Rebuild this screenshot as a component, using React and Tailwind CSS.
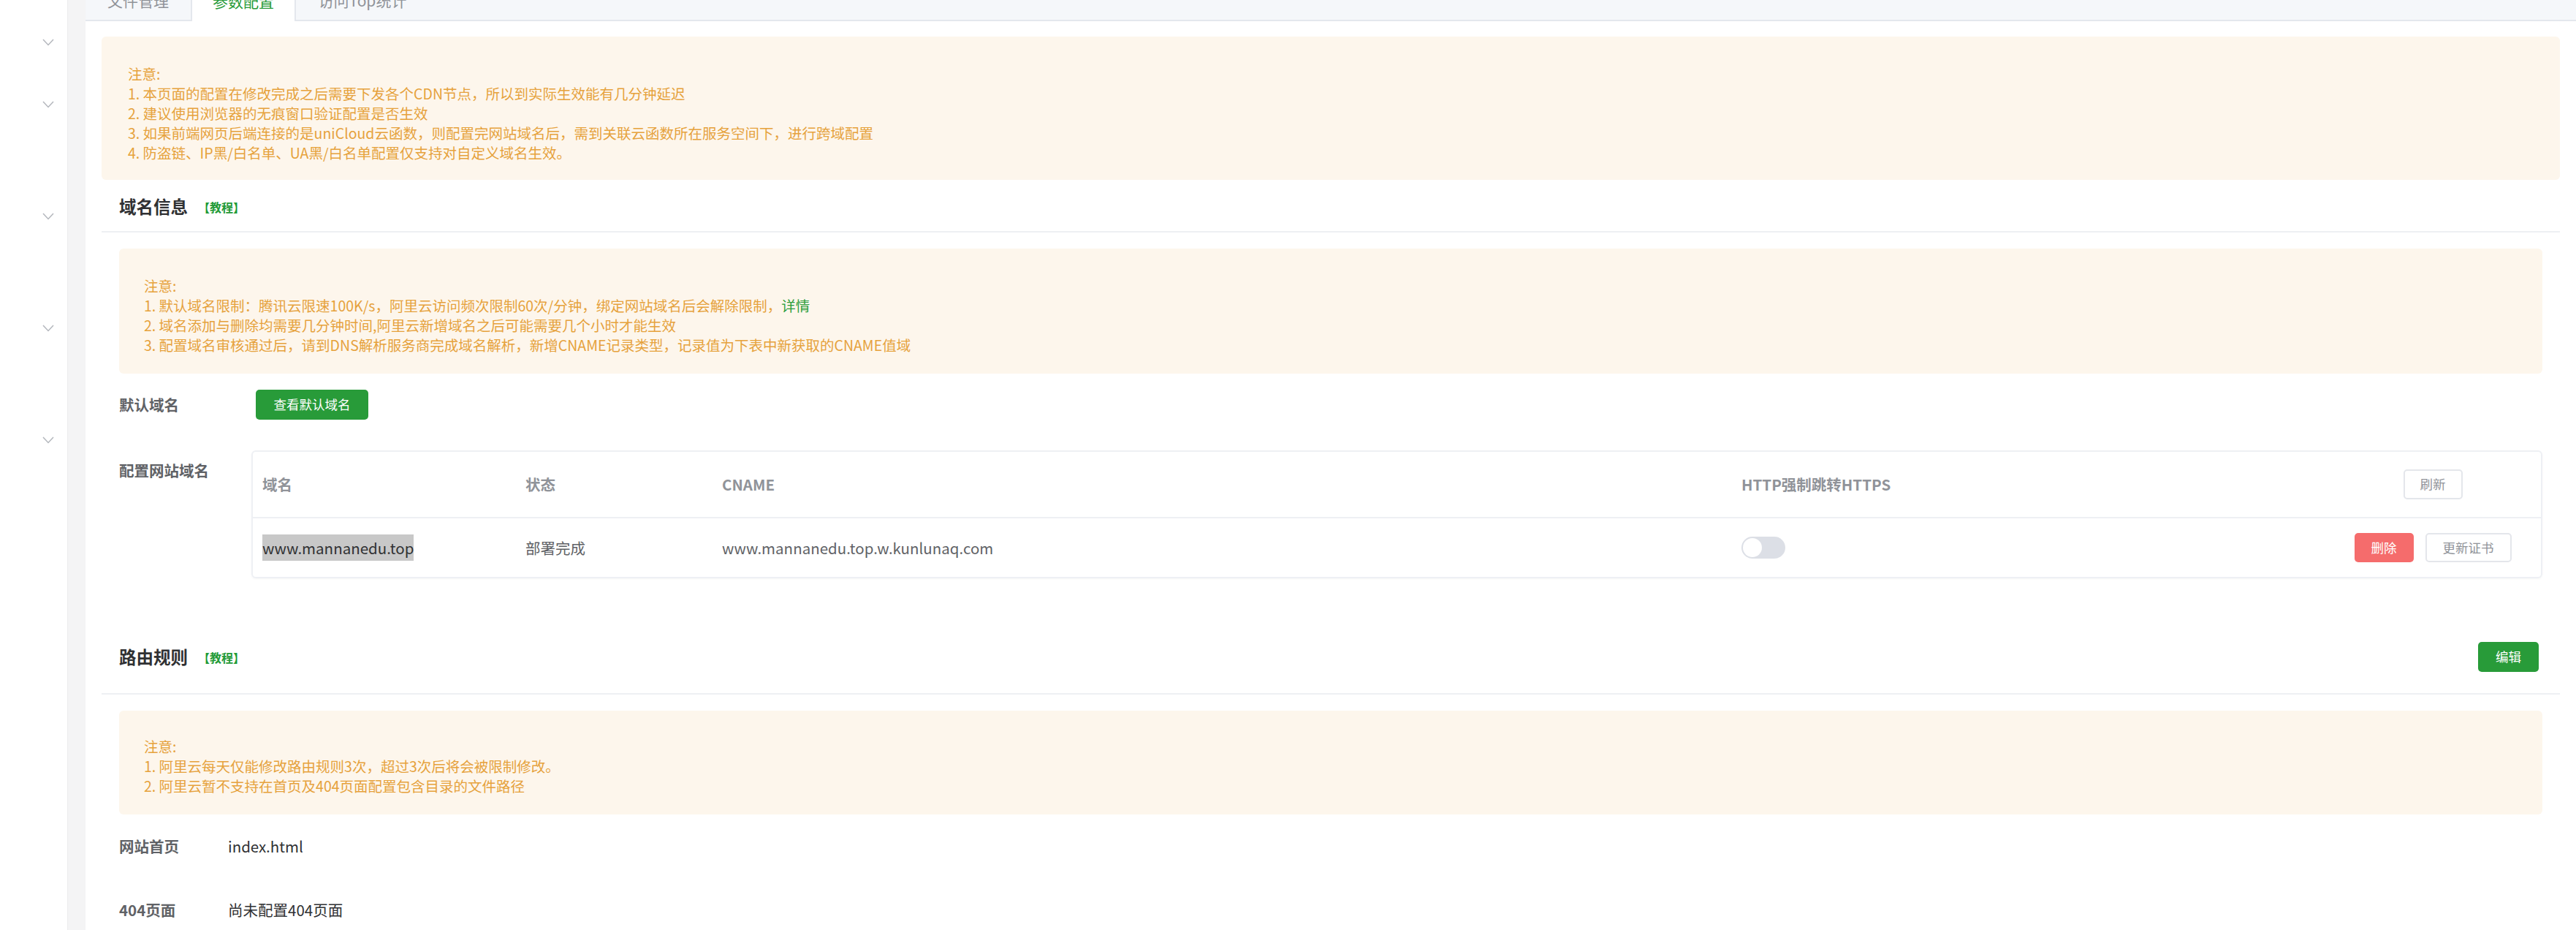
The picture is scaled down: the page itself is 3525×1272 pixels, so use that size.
import { useState } from "react";

const font = { fontFamily: '"Noto Sans CJK SC", "Noto Sans", sans-serif' };

function Chevron() {
  return (
    <svg width="16" height="10" viewBox="0 0 16 10" fill="none">
      <polyline points="1,1 8,8.5 15,1" stroke="#b4b7bd" strokeWidth="1.5" />
    </svg>
  );
}

function Notice({ lines = [], className = "", children }) {
  return (
    <div className={"bg-[#fdf6ec] rounded-[6px] text-[#e6a23c] text-[19.5px] leading-[27px] " + className}>
      <div>注意:</div>
      {children}
      {lines.map((l) => (
        <div key={l}>{l}</div>
      ))}
    </div>
  );
}

function SectionHeader({ title, action, className }) {
  return (
    <>
      <div className={"flex items-center justify-between h-[41px] pl-[24px] pr-[29px] " + className}>
        <div className="flex items-center">
          <span className="text-[23.5px] font-bold text-[#303133]">{title}</span>
          <span className="ml-[14px] text-[16px] font-bold text-[#229a36]">【教程】</span>
        </div>
        {action}
      </div>
      <div className="h-[2px] bg-[#eef0f3]" />
    </>
  );
}

const cols = "grid grid-cols-[358px_269px_1395px_813px_1fr] items-center";

export default function App() {
  const [https, setHttps] = useState(false);

  return (
    <div className="flex w-full h-[1272px] overflow-hidden bg-white" style={font}>
      {/* left menu */}
      <div className="w-[92px] shrink-0 bg-white flex flex-col items-end pr-[18px]">
        <div className="mt-[53px]"><Chevron /></div>
        <div className="mt-[75px]"><Chevron /></div>
        <div className="mt-[143px]"><Chevron /></div>
        <div className="mt-[143px]"><Chevron /></div>
        <div className="mt-[143px]"><Chevron /></div>
      </div>
      <div className="w-[25px] shrink-0 bg-[#f4f4f5] border-l border-[#ececee]" />

      <div className="flex-1 min-w-0 flex flex-col">
        {/* tabs (scrolled partly out of view) */}
        <div className="flex h-[54px] -mt-[25px] bg-[#f5f7fa] border-b-2 border-[#e4e7ed] text-[21px]">
          <div className="w-[144px] flex items-center justify-center text-[#909399]">文件管理</div>
          <div className="w-[144px] flex items-center justify-center text-[#279a38] bg-white border-x-2 border-[#e4e7ed] -mb-[2px]">
            参数配置
          </div>
          <div className="w-[182px] flex items-center justify-center text-[#909399]">访问Top统计</div>
        </div>

        <div className="px-[22px]">
          <Notice
            className="mt-[21px] h-[196px] pt-[37px] pl-[36px]"
            lines={[
              "1. 本页面的配置在修改完成之后需要下发各个CDN节点，所以到实际生效能有几分钟延迟",
              "2. 建议使用浏览器的无痕窗口验证配置是否生效",
              "3. 如果前端网页后端连接的是uniCloud云函数，则配置完网站域名后，需到关联云函数所在服务空间下，进行跨域配置",
              "4. 防盗链、IP黑/白名单、UA黑/白名单配置仅支持对自定义域名生效。",
            ]}
          />

          <SectionHeader title="域名信息" className="mt-[16px] mb-[13px]" />

          <div className="px-[24px]">
            <Notice
              className="mt-[22px] h-[171px] pt-[37px] pl-[34px]"
              lines={[
                "2. 域名添加与删除均需要几分钟时间,阿里云新增域名之后可能需要几个小时才能生效",
                "3. 配置域名审核通过后，请到DNS解析服务商完成域名解析，新增CNAME记录类型，记录值为下表中新获取的CNAME值域",
              ]}
            >
              <div>
                1. 默认域名限制：腾讯云限速100K/s，阿里云访问频次限制60次/分钟，绑定网站域名后会解除限制，
                <span className="text-[#2a9d3a]">详情</span>
              </div>
            </Notice>

            <div className="flex items-center mt-[22px]">
              <div className="w-[187px] text-[20.5px] font-bold text-[#606266]">默认域名</div>
              <button className="w-[154px] h-[41px] rounded-[5px] bg-[#289b39] text-white text-[17.5px]">
                查看默认域名
              </button>
            </div>

            <div className="flex items-start mt-[42px]">
              <div className="w-[181px] shrink-0 pt-[12px] text-[20.5px] font-bold text-[#606266]">配置网站域名</div>
              <div className="flex-1 min-w-0 border-2 border-[#eef0f4] rounded-[6px] shadow-[0_1px_3px_rgba(0,0,0,0.04)] text-[20.5px]">
                <div className={cols + " h-[91px] border-b-2 border-[#eef0f4] font-bold text-[#909399]"}>
                  <div className="pl-[13px]">域名</div>
                  <div className="pl-[15px]">状态</div>
                  <div className="pl-[15px]">CNAME</div>
                  <div className="pl-[15px]">HTTP强制跳转HTTPS</div>
                  <div className="flex justify-center">
                    <button className="w-[81px] h-[41px] rounded-[5px] border-2 border-[#e4e6eb] bg-white text-[#909399] text-[17.5px] font-normal">
                      刷新
                    </button>
                  </div>
                </div>
                <div className={cols + " h-[80px] text-[#606266]"}>
                  <div className="pl-[13px]">
                    <span className="bg-[#c8c8c8] text-[#303133] py-[3px]">www.mannanedu.top</span>
                  </div>
                  <div className="pl-[15px]">部署完成</div>
                  <div className="pl-[15px]">www.mannanedu.top.w.kunlunaq.com</div>
                  <div className="pl-[15px]">
                    <button
                      onClick={() => setHttps(!https)}
                      className={
                        "w-[60px] h-[30px] rounded-full flex items-center px-[2px] " +
                        (https ? "bg-[#289b39] justify-end" : "bg-[#dcdfe6] justify-start")
                      }
                    >
                      <span className="w-[26px] h-[26px] rounded-full bg-white" />
                    </button>
                  </div>
                  <div className="flex justify-center gap-[16px]">
                    <button className="w-[81px] h-[40px] rounded-[5px] bg-[#f56c6c] text-white text-[17.5px]">删除</button>
                    <button className="w-[118px] h-[40px] rounded-[5px] border-2 border-[#e4e6eb] bg-white text-[#909399] text-[17.5px]">
                      更新证书
                    </button>
                  </div>
                </div>
              </div>
            </div>
          </div>

          <SectionHeader
            title="路由规则"
            className="mt-[87px] mb-[29px]"
            action={
              <button className="w-[83px] h-[41px] rounded-[5px] bg-[#289b39] text-white text-[17.5px]">编辑</button>
            }
          />

          <div className="px-[24px]">
            <Notice
              className="mt-[22px] h-[142px] pt-[35px] pl-[34px]"
              lines={[
                "1. 阿里云每天仅能修改路由规则3次，超过3次后将会被限制修改。",
                "2. 阿里云暂不支持在首页及404页面配置包含目录的文件路径",
              ]}
            />
            <div className="flex items-center h-[44px] mt-[21px] text-[20.5px]">
              <div className="w-[149px] font-bold text-[#606266]">网站首页</div>
              <div className="text-[#303133]">index.html</div>
            </div>
            <div className="flex items-center h-[44px] mt-[43px] text-[20.5px]">
              <div className="w-[149px] font-bold text-[#606266]">404页面</div>
              <div className="text-[#303133]">尚未配置404页面</div>
            </div>
          </div>
        </div>
      </div>
    </div>
  );
}
